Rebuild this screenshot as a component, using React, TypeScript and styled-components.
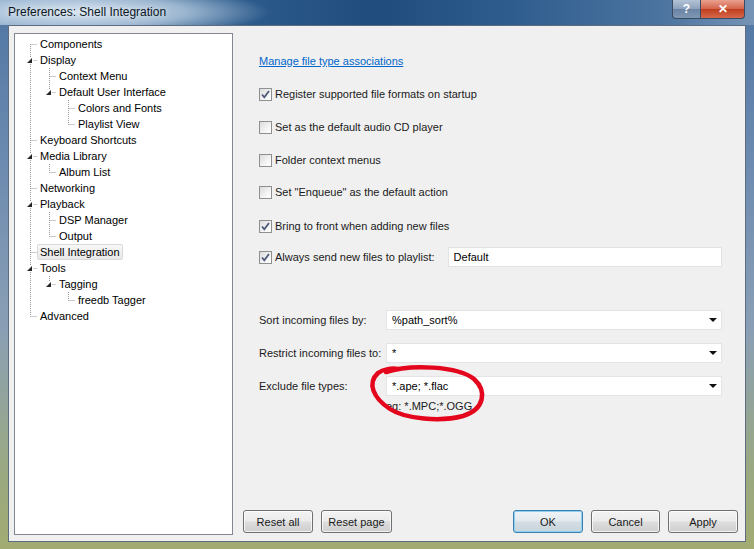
import React from "react";
import styled, { createGlobalStyle, css } from "styled-components";

const GlobalStyle = createGlobalStyle`
  html, body {
    margin: 0;
    padding: 0;
    overflow: hidden;
    background: #ffffff;
  }
  * {
    box-sizing: border-box;
  }
`;

const UI_FONT = `"Liberation Sans", Arial, sans-serif`;

const Window = styled.div`
  position: relative;
  width: 754px;
  height: 549px;
  display: flex;
  flex-direction: column;
  font-family: ${UI_FONT};
  font-size: 11px;
  color: #1a1a1a;
  background: linear-gradient(
    180deg,
    #4f76a3 0%,
    #6d8bb0 30%,
    #8a9fb5 60%,
    #9aa983 85%,
    #a2ab72 100%
  );
`;

const TitleBar = styled.div`
  position: relative;
  height: 25px;
  flex: none;
  display: flex;
  align-items: flex-start;
  justify-content: space-between;
  background:
    radial-gradient(ellipse 190px 26px at 80px 12px, rgba(220, 232, 243, 0.97) 0%, rgba(190, 210, 228, 0.75) 55%, rgba(140, 170, 200, 0) 100%),
    linear-gradient(90deg, #5f87b3 0%, #2d5b8c 32%, #1f4c7d 50%, #2f5d8e 68%, #4c74a0 88%, #7594b6 100%);
`;

const TitleText = styled.span`
  margin: 5px 0 0 8px;
  font-size: 12px;
  line-height: 14px;
  color: #0c1622;
  text-shadow: 0 0 6px rgba(255, 255, 255, 0.85);
`;

const CaptionButtons = styled.div`
  display: flex;
  margin-right: 9px;
`;

const CaptionButton = styled.div<{ $variant: "help" | "close" }>`
  height: 19px;
  display: flex;
  align-items: center;
  justify-content: center;
  color: #ffffff;
  font-weight: bold;
  font-size: 12px;
  border: 1px solid #3a4a60;
  border-top: none;
  ${(p) =>
    p.$variant === "help"
      ? css`
          width: 28px;
          border-radius: 0 0 0 4px;
          border-right: none;
          background: linear-gradient(180deg, #b3c3d6 0%, #8ea3bd 48%, #6b84a3 52%, #7e97b5 100%);
        `
      : css`
          width: 45px;
          border-radius: 0 0 4px 0;
          background: linear-gradient(180deg, #e9a190 0%, #d4654c 48%, #c13f1f 52%, #d4684c 100%);
        `}
`;

const Body = styled.div`
  flex: 1;
  margin: 0 8px 7px 8px;
  background: #f0f0f0;
  border: 1px solid #5d6c7f;
  display: grid;
  grid-template-columns: 219px 1fr;
  column-gap: 10px;
  padding: 7px 7px 6px 5px;
  min-height: 0;
`;

/* ---------- tree ---------- */

const TreeBox = styled.div`
  background: #ffffff;
  border: 1px solid #828790;
  padding: 2px 0 0 3px;
  color: #000000;
`;

const TreeRow = styled.div`
  display: flex;
  height: 16px;
  align-items: center;
`;

const Cell = styled.svg`
  width: 19px;
  height: 16px;
  flex: none;
  display: block;
`;

const TreeLabel = styled.span<{ $selected?: boolean }>`
  height: 16px;
  line-height: 15px;
  padding: 0 2px;
  white-space: nowrap;
  border: 1px solid transparent;
  border-radius: 2px;
  ${(p) =>
    p.$selected &&
    css`
      background: linear-gradient(180deg, #f8f8f8 0%, #e8e8e8 100%);
      border-color: #d9d9d9;
    `}
`;

type Node = {
  label: string;
  children?: Node[];
  selected?: boolean;
};

const tree: Node[] = [
  { label: "Components" },
  {
    label: "Display",
    children: [
      { label: "Context Menu" },
      {
        label: "Default User Interface",
        children: [{ label: "Colors and Fonts" }, { label: "Playlist View" }],
      },
    ],
  },
  { label: "Keyboard Shortcuts" },
  { label: "Media Library", children: [{ label: "Album List" }] },
  { label: "Networking" },
  {
    label: "Playback",
    children: [{ label: "DSP Manager" }, { label: "Output" }],
  },
  { label: "Shell Integration", selected: true },
  {
    label: "Tools",
    children: [{ label: "Tagging", children: [{ label: "freedb Tagger" }] }],
  },
  { label: "Advanced" },
];

const LINE = "#9a9a9a";
const CX = 12.5;

const GuideCell = ({ continues }: { continues: boolean }) => (
  <Cell viewBox="0 0 19 16">
    {continues && (
      <line x1={CX} y1={0} x2={CX} y2={16} stroke={LINE} strokeDasharray="1 1" />
    )}
  </Cell>
);

const ConnectorCell = ({
  first,
  last,
  expandable,
}: {
  first: boolean;
  last: boolean;
  expandable: boolean;
}) => (
  <Cell viewBox="0 0 19 16">
    <line
      x1={CX}
      y1={first ? 8 : 0}
      x2={CX}
      y2={last ? 8.5 : 16}
      stroke={LINE}
      strokeDasharray="1 1"
    />
    {expandable ? (
      <>
        <rect x={8} y={5} width={7} height={7} fill="#ffffff" />
        <polygon points="9,11 14,6 14,11" fill="#262626" />
        <line x1={15.5} y1={8.5} x2={19} y2={8.5} stroke={LINE} strokeDasharray="1 1" />
      </>
    ) : (
      <line x1={CX} y1={8.5} x2={19} y2={8.5} stroke={LINE} strokeDasharray="1 1" />
    )}
  </Cell>
);

const renderNodes = (
  nodes: Node[],
  guides: boolean[],
  isRoot: boolean
): React.ReactNode[] =>
  nodes.flatMap((node, i) => {
    const last = i === nodes.length - 1;
    const row = (
      <TreeRow key={guides.length + node.label}>
        {guides.map((g, gi) => (
          <GuideCell key={gi} continues={g} />
        ))}
        <ConnectorCell
          first={isRoot && i === 0}
          last={last}
          expandable={!!node.children}
        />
        <TreeLabel $selected={node.selected}>{node.label}</TreeLabel>
      </TreeRow>
    );
    return [
      row,
      ...(node.children ? renderNodes(node.children, [...guides, !last], false) : []),
    ];
  });

/* ---------- right panel ---------- */

const Panel = styled.div`
  display: flex;
  flex-direction: column;
  justify-content: space-between;
  padding-bottom: 2px;
`;

const Content = styled.div`
  display: flex;
  flex-direction: column;
  padding: 18px 16px 0 16px;
`;

const Row = styled.div<{ $mt?: number }>`
  display: flex;
  align-items: center;
  height: 20px;
  margin-top: ${(p) => p.$mt ?? 0}px;
`;

const Link = styled.a`
  color: #0066cc;
  text-decoration: underline;
  cursor: pointer;
`;

const CheckLabel = styled.label`
  display: flex;
  align-items: center;
  gap: 3px;
  white-space: nowrap;
`;

const Box = styled.span`
  width: 13px;
  height: 13px;
  flex: none;
  border: 1px solid #8e8f8f;
  background: linear-gradient(135deg, #dcdcdc 0%, #f4f4f4 60%, #ffffff 100%);
  display: flex;
  align-items: center;
  justify-content: center;
`;

const Check = ({ checked, label }: { checked?: boolean; label: string }) => (
  <CheckLabel>
    <Box>
      {checked && (
        <svg width="11" height="11" viewBox="0 0 11 11">
          <path
            d="M2 5.5 L4.3 8.3 L9 2"
            fill="none"
            stroke="#4e5a78"
            strokeWidth="1.8"
          />
        </svg>
      )}
    </Box>
    {label}
  </CheckLabel>
);

const TextBox = styled.div`
  flex: 1;
  height: 20px;
  margin-left: 13px;
  background: #ffffff;
  border: 1px solid #e2e3e5;
  padding-left: 5px;
  line-height: 18px;
  color: #000000;
`;

const FieldLabel = styled.span`
  width: 127px;
  flex: none;
  white-space: nowrap;
`;

const Combo = styled.div`
  flex: 1;
  height: 20px;
  display: flex;
  align-items: center;
  justify-content: space-between;
  background: #ffffff;
  border: 1px solid #e4e4e6;
  padding: 0 4px 0 5px;
  color: #000000;
`;

const Arrow = styled.span`
  width: 0;
  height: 0;
  border-left: 4px solid transparent;
  border-right: 4px solid transparent;
  border-top: 4px solid #111111;
`;

const Hint = styled.div`
  margin: 4px 0 0 127px;
  color: #1a1a1a;
`;

const ButtonBar = styled.div`
  display: flex;
  gap: 8px;
`;

const Spacer = styled.div`
  flex: 1;
`;

const Button = styled.button<{ $w: number; $default?: boolean }>`
  width: ${(p) => p.$w}px;
  height: 23px;
  font-family: ${UI_FONT};
  font-size: 11px;
  color: #1a1a1a;
  border: 1px solid #707070;
  border-radius: 3px;
  padding: 0;
  background: linear-gradient(180deg, #f3f3f3 0%, #ebebeb 48%, #dddddd 52%, #cfcfcf 100%);
  box-shadow: inset 0 0 0 1px rgba(255, 255, 255, 0.75);
  ${(p) =>
    p.$default &&
    css`
      border-color: #3c7fb1;
      background: linear-gradient(180deg, #eef3f6 0%, #e3eaee 48%, #d3dde3 52%, #c8d5dc 100%);
      box-shadow: inset 0 0 0 1px #8fd0f2;
    `}
`;

const Annotation = styled.svg`
  position: absolute;
  left: 0;
  top: 0;
  width: 754px;
  height: 549px;
  pointer-events: none;
`;

export default function App() {
  return (
    <>
      <GlobalStyle />
      <Window>
        <TitleBar>
          <TitleText>Preferences: Shell Integration</TitleText>
          <CaptionButtons>
            <CaptionButton $variant="help">?</CaptionButton>
            <CaptionButton $variant="close">✕</CaptionButton>
          </CaptionButtons>
        </TitleBar>
        <Body>
          <TreeBox>{renderNodes(tree, [], true)}</TreeBox>
          <Panel>
            <Content>
              <Row>
                <Link>Manage file type associations</Link>
              </Row>
              <Row $mt={13}>
                <Check checked label="Register supported file formats on startup" />
              </Row>
              <Row $mt={13}>
                <Check label="Set as the default audio CD player" />
              </Row>
              <Row $mt={13}>
                <Check label="Folder context menus" />
              </Row>
              <Row $mt={12}>
                <Check label={'Set "Enqueue" as the default action'} />
              </Row>
              <Row $mt={14}>
                <Check checked label="Bring to front when adding new files" />
              </Row>
              <Row $mt={11}>
                <Check checked label="Always send new files to playlist:" />
                <TextBox>Default</TextBox>
              </Row>
              <Row $mt={43}>
                <FieldLabel>Sort incoming files by:</FieldLabel>
                <Combo>
                  %path_sort%
                  <Arrow />
                </Combo>
              </Row>
              <Row $mt={13}>
                <FieldLabel>Restrict incoming files to:</FieldLabel>
                <Combo>
                  *
                  <Arrow />
                </Combo>
              </Row>
              <Row $mt={13}>
                <FieldLabel>Exclude file types:</FieldLabel>
                <Combo>
                  *.ape; *.flac
                  <Arrow />
                </Combo>
              </Row>
              <Hint>eg: *.MPC;*.OGG</Hint>
            </Content>
            <ButtonBar>
              <Button $w={70}>Reset all</Button>
              <Button $w={71}>Reset page</Button>
              <Spacer />
              <Button $w={70} $default>
                OK
              </Button>
              <Button $w={69}>Cancel</Button>
              <Button $w={70}>Apply</Button>
            </ButtonBar>
          </Panel>
        </Body>
        <Annotation viewBox="0 0 754 549">
          <path
            d="M386 372 C 410 364, 458 366, 474 379 C 487 391, 485 409, 463 416 C 441 422, 405 419, 390 409 C 373 398, 367 383, 378 373 C 383 369, 392 368, 398 369"
            fill="none"
            stroke="#e3061d"
            strokeWidth="4.5"
            strokeLinecap="round"
          />
        </Annotation>
      </Window>
    </>
  );
}
